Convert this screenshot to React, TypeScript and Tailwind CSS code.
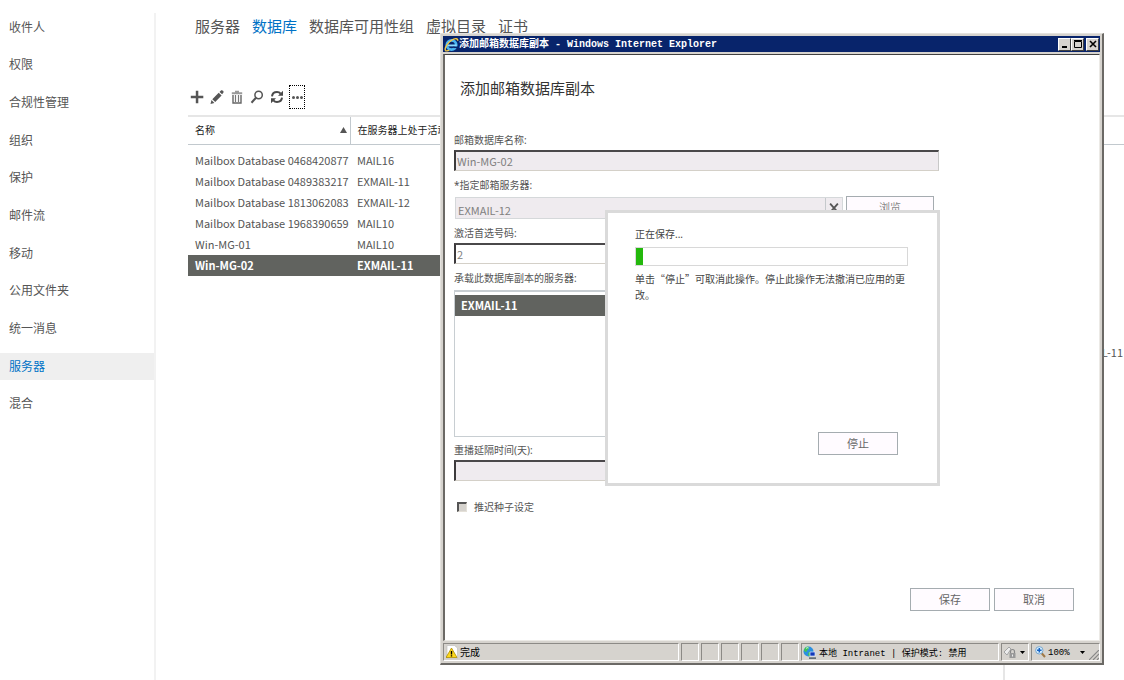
import type { ReactNode } from "react";

const NAV = [
  "收件人",
  "权限",
  "合规性管理",
  "组织",
  "保护",
  "邮件流",
  "移动",
  "公用文件夹",
  "统一消息",
  "服务器",
  "混合",
];

const TABS = ["服务器", "数据库", "数据库可用性组", "虚拟目录", "证书"];

const DATABASES = [
  { name: "Mailbox Database 0468420877", server: "MAIL16" },
  { name: "Mailbox Database 0489383217", server: "EXMAIL-11" },
  { name: "Mailbox Database 1813062083", server: "EXMAIL-12" },
  { name: "Mailbox Database 1968390659", server: "MAIL10" },
  { name: "Win-MG-01", server: "MAIL10" },
  { name: "Win-MG-02", server: "EXMAIL-11" },
];

const SUNKEN =
  "border border-t-[#8c8a86] border-l-[#8c8a86] border-r-white border-b-white";

const FIELD =
  "block w-[485px] h-[21px] border-2 border-t-[#4a484a] border-l-[#3c3a3c] border-r border-r-[#c8c8c8] border-b border-b-[#d4d0c8] px-px font-['Noto_Sans_CJK_SC',sans-serif] text-[11px] text-[#808080] outline-none";

function Sidebar() {
  return (
    <nav className="relative w-[156px] shrink-0 pt-[9px]">
      <span className="absolute top-[13px] right-0 bottom-0 w-[2px] bg-[#f2f2f2]" />
      <ul className="grid h-[414px] auto-rows-fr">
        {NAV.map((item) => (
          <li key={item} className="flex items-center">
            <a
              href="#"
              className={
                item === "服务器"
                  ? "flex h-[27px] w-full items-center bg-[#efefef] pl-[9px] text-[12px] text-[#0072c6]"
                  : "flex h-[27px] w-full items-center pl-[9px] text-[12px] text-[#555]"
              }
            >
              {item}
            </a>
          </li>
        ))}
      </ul>
    </nav>
  );
}

function Tool({ label, children }: { label: string; children: ReactNode }) {
  return (
    <button type="button" aria-label={label} className="flex size-4 items-center justify-center">
      {children}
    </button>
  );
}

function Toolbar() {
  return (
    <div className="flex h-6 items-center gap-1 pl-px">
      <Tool label="新建">
        <svg width="14" height="14" viewBox="0 0 14 14" fill="#555">
          <path d="M5.800 .8h2.500v5h5v2.500h-5v5H5.800v-5h-5V5.800h5z" />
        </svg>
      </Tool>
      <Tool label="编辑">
        <svg width="16" height="16" viewBox="0 0 16 16" fill="#555">
          <path d="M1.500 15l1-4 2.900 2.900zM3.300 10.200l6.400-6.500 2.900 2.900-6.400 6.500zM10.500 2.900l1.200-1.200c.8-.8 1.700-.6 2.300 0s.9 1.500.1 2.300l-1 1.300z" />
        </svg>
      </Tool>
      <Tool label="删除">
        <svg width="12" height="14" viewBox="0 0 12 14">
          <path d="M4 .8h4v1.500h3.200v2H.8v-2H4z" fill="#999" />
          <path d="M2 5v8h8V5" fill="none" stroke="#666" strokeWidth="1.400" />
          <path d="M4.500 5v7M7.500 5v7" stroke="#777" strokeWidth="1.200" />
        </svg>
      </Tool>
      <Tool label="搜索">
        <svg width="14" height="14" viewBox="0 0 14 14" fill="none" stroke="#555">
          <circle cx="8.600" cy="5" r="3.700" strokeWidth="1.500" />
          <path d="M6 7.800L1.500 12.800" strokeWidth="2.100" />
        </svg>
      </Tool>
      <Tool label="刷新">
        <svg width="14" height="14" viewBox="0 0 14 14">
          <path
            d="M2 6.300C2.300 3.500 4.500 2 7 2c1.500 0 2.700.5 3.700 1.600M12 7.700C11.700 10.500 9.500 12 7 12c-1.500 0-2.700-.5-3.700-1.600"
            fill="none"
            stroke="#4a4a4a"
            strokeWidth="2"
          />
          <path d="M13 .8v5H8zM1 13.200v-5h5z" fill="#4a4a4a" />
        </svg>
      </Tool>
      <button
        type="button"
        aria-label="更多"
        className="flex h-6 w-4 items-center justify-center gap-px border border-dotted border-black"
      >
        <span className="size-[3px] rounded-full bg-[#555]" />
        <span className="size-[3px] rounded-full bg-[#555]" />
        <span className="size-[3px] rounded-full bg-[#555]" />
      </button>
    </div>
  );
}

function DatabaseTable() {
  return (
    <table className="w-full table-fixed text-left whitespace-nowrap">
      <colgroup>
        <col className="w-[162px]" />
        <col />
      </colgroup>
      <thead>
        <tr className="h-[28px] border-t-2 border-b border-t-[#e6e6e6] border-b-[#c2c9ce] text-[10px] text-[#222]">
          <th className="border-r border-[#c2c9ce] py-0 pl-[7px] font-normal">
            <span className="flex items-center justify-between pr-[3px]">
              名称
              <svg width="7" height="6" viewBox="0 0 7 6" fill="#555">
                <path d="M3.500 0L7 6H0z" />
              </svg>
            </span>
          </th>
          <th className="py-0 pl-[7px] font-normal">在服务器上处于活动状态</th>
        </tr>
      </thead>
      <tbody className="font-['Noto_Sans_CJK_SC',sans-serif] text-[11px] text-[#555] before:block before:h-[5px]">
        {DATABASES.map((db) => (
          <tr
            key={db.name}
            className={
              db.name === "Win-MG-02"
                ? "h-[21px] bg-[#61635f] font-bold text-white"
                : "h-[21px]"
            }
          >
            <td className="p-0 pl-[7px] leading-4">{db.name}</td>
            <td className="p-0 pl-[7px] leading-4">{db.server}</td>
          </tr>
        ))}
      </tbody>
    </table>
  );
}

function IeLogo() {
  return (
    <svg width="15" height="15" viewBox="0 0 16 16" className="shrink-0">
      <circle cx="8" cy="8.500" r="5" fill="none" stroke="#49b5f0" strokeWidth="3" />
      <path d="M4 9h9.500" stroke="#8bdcff" strokeWidth="2" />
      <path d="M10 10.200h5v1.600h-5z" fill="#08246b" />
      <path
        d="M14.500 4C15.200 1.500 12 .8 8 3.500S.2 11.500 1.500 14.200c.6 1 2.500.6 4-.3"
        fill="none"
        stroke="#f5c945"
        strokeWidth="1.500"
      />
    </svg>
  );
}

function CaptionButton({ label, children }: { label: string; children: ReactNode }) {
  return (
    <button
      type="button"
      aria-label={label}
      className="flex h-[13px] w-[13px] items-center justify-center border border-t-white border-l-white border-r-[#404040] border-b-[#404040] bg-[#d6d3ce]"
    >
      <svg width="10" height="10" viewBox="0 0 10 10" fill="none" stroke="#000">
        {children}
      </svg>
    </button>
  );
}

function TitleBar() {
  return (
    <div className="flex h-4 items-center bg-[#08246b] px-px text-white">
      <IeLogo />
      <h1 className="grow truncate pt-[2px] font-['Liberation_Mono','Noto_Sans_CJK_SC',monospace] text-[10px] leading-4 font-bold">
        添加邮箱数据库副本 - Windows Internet Explorer
      </h1>
      <div className="flex">
        <CaptionButton label="最小化">
          <path d="M2 8h5" strokeWidth="2" />
        </CaptionButton>
        <CaptionButton label="最大化">
          <path d="M1.500 2.500h7v6h-7z" />
          <path d="M1 1.500h8" />
        </CaptionButton>
        <span className="w-[2px]" />
        <CaptionButton label="关闭">
          <path d="M2 2l6 6M8 2L2 8" strokeWidth="1.600" />
        </CaptionButton>
      </div>
    </div>
  );
}

function PushButton({ children }: { children: ReactNode }) {
  return (
    <button
      type="button"
      className="h-[23px] w-20 border border-[#a5acb0] bg-[#fffbff] text-[11px] leading-4 text-[#666]"
    >
      {children}
    </button>
  );
}

function SavingDialog() {
  return (
    <div
      role="dialog"
      aria-label="正在保存"
      className="absolute top-[155px] left-[160px] flex h-[276px] w-[335px] flex-col border-3 border-[#dadada] bg-white pt-[11px] pr-[29px] pb-7 pl-[27px] text-[10px] text-[#444]"
    >
      <p className="leading-5">正在保存...</p>
      <div
        role="progressbar"
        aria-label="正在保存"
        className="mt-[3px] h-[19px] border border-[#d8d8d8] bg-white"
      >
        <div className="h-full w-[7px] bg-[#23b80c]" />
      </div>
      <p className="mt-[5px] font-['Noto_Sans_CJK_SC',sans-serif] leading-4">
        单击“停止”可取消此操作。停止此操作无法撤消已应用的更改。
      </p>
      <div className="mt-auto flex justify-end pr-[10px]">
        <PushButton>停止</PushButton>
      </div>
    </div>
  );
}

function CopyForm() {
  return (
    <form className="relative flex grow flex-col bg-white pb-[29px] pl-[9px] text-[10px] leading-5 text-[#555]">
      <h2 className="mt-[21px] pl-[6px] text-[15px] leading-6 text-[#333]">添加邮箱数据库副本</h2>

      <label htmlFor="db-name" className="mt-[30px]">
        邮箱数据库名称:
      </label>
      <input
        id="db-name"
        readOnly
        defaultValue="Win-MG-02"
        className={`${FIELD} bg-[#efebef]`}
      />

      <label htmlFor="server" className="mt-1">
        *指定邮箱服务器:
      </label>
      <div className="mt-px flex items-start gap-[3px] pl-px">
        <div className="mt-px flex h-[22px] w-[388px] border border-[#d5d8da] bg-[#efebef]">
          <input
            id="server"
            readOnly
            defaultValue="EXMAIL-12"
            className="min-w-0 grow px-[2px] pt-[3px] font-['Noto_Sans_CJK_SC',sans-serif] text-[11px] text-[#808080] outline-none"
          />
          <button
            type="button"
            aria-label="清除"
            className="flex w-[17px] items-center justify-center border-l border-[#c5c9cc]"
          >
            <svg width="10" height="10" viewBox="0 0 9 9" fill="none" stroke="#555" strokeWidth="1.600">
              <path d="M1 .5l7 8M8 .5l-7 8" />
            </svg>
          </button>
        </div>
        <button
          type="button"
          className="h-[23px] w-[88px] border border-[#a5acb0] bg-[#fffbff] text-[11px] leading-4 text-[#888]"
        >
          浏览
        </button>
      </div>

      <label htmlFor="preference" className="mt-1">
        激活首选号码:
      </label>
      <input id="preference" defaultValue="2" className={`${FIELD} bg-white`} />

      <span id="hosts" className="mt-1">
        承载此数据库副本的服务器:
      </span>
      <ul
        role="listbox"
        aria-labelledby="hosts"
        className="mt-[2px] h-[147px] w-[485px] border border-t-2 border-[#c8ced2] pt-[3px]"
      >
        <li
          role="option"
          aria-selected="true"
          className="h-[21px] bg-[#61635f] pl-[6px] font-['Noto_Sans_CJK_SC',sans-serif] text-[11px] leading-[21px] font-bold text-white"
        >
          EXMAIL-11
        </li>
      </ul>

      <label htmlFor="replay-lag" className="mt-[3px]">
        重播延隔时间(天):
      </label>
      <input id="replay-lag" readOnly className={`${FIELD} bg-[#efebef]`} />

      <div className="mt-4 flex items-center gap-[7px] pl-[3px]">
        <input
          id="postpone"
          type="checkbox"
          className="size-[10px] appearance-none border border-t-2 border-l-2 border-t-[#555] border-l-[#555] border-r-[#e4e0d8] border-b-[#e4e0d8] bg-[#d6d3ce]"
        />
        <label htmlFor="postpone">推迟种子设定</label>
      </div>

      <div className="mt-auto flex justify-end gap-1 pr-[25px]">
        <PushButton>保存</PushButton>
        <PushButton>取消</PushButton>
      </div>

      <SavingDialog />
    </form>
  );
}

function Caret() {
  return (
    <svg width="5" height="3" viewBox="0 0 5 3">
      <path d="M0 0h5L2.500 3z" />
    </svg>
  );
}

function StatusBar() {
  return (
    <div className="flex h-[18px] gap-[2px] font-['Liberation_Mono','Noto_Sans_CJK_SC',monospace] text-[10px] leading-4 whitespace-nowrap text-black">
      <div className={`${SUNKEN} flex grow items-center gap-[2px] pl-[2px]`}>
        <svg width="12" height="14" viewBox="0 0 12 14">
          <path d="M1 .5h7.500L11.500 3v10.500H1z" fill="#fff" stroke="#bbb" strokeWidth=".6" />
          <path d="M5.500 3L11 12.500H0z" fill="#ffd91c" stroke="#a98a00" strokeWidth=".8" />
          <path d="M5.500 6v3.500M5.500 10.300v1.200" stroke="#000" strokeWidth="1.400" />
        </svg>
        <span className="pt-1">完成</span>
      </div>
      {[1, 2, 3, 4, 5, 6].map((n) => (
        <div key={n} className={`${SUNKEN} w-[18px]`} />
      ))}
      <div className={`${SUNKEN} flex w-[198px] items-center gap-[3px] pl-px`}>
        <svg width="13" height="13" viewBox="0 0 13 13">
          <circle cx="5.500" cy="5.500" r="5" fill="#2b8fe0" />
          <path d="M2 2c2-2 4-1 4 0S4 4 3.500 5.500 1 5 1 4zM6 6c2-1 3 1 2 3s-3 1-3-1z" fill="#43c552" />
          <path d="M3 2.500c1-1 2-1 2.500-.5" stroke="#dff6ff" fill="none" />
          <path d="M7 6h5v4H7z" fill="#1238b8" stroke="#dbe6ff" strokeWidth=".7" />
          <path d="M6 11.500h7v1.200H6z" fill="#345" />
        </svg>
        <span className="pt-1 text-[9px]">本地 Intranet | 保护模式: 禁用</span>
      </div>
      <button
        type="button"
        aria-label="隐私"
        className={`${SUNKEN} flex w-[28px] items-center justify-between pr-[3px] pl-px`}
      >
        <svg width="14" height="14" viewBox="0 0 14 14">
          <path d="M1 7l5-5 2 2-4 6z" fill="#ececec" stroke="#a5a5a5" />
          <path d="M7.500 8V6.500a2 2 0 0 1 4 0V8" fill="none" stroke="#888" strokeWidth="1.200" />
          <path d="M6.500 8h6v5h-6z" fill="#999" />
          <path d="M9.500 9.500v2" stroke="#eee" />
        </svg>
        <Caret />
      </button>
      <button
        type="button"
        className={`${SUNKEN} relative flex w-[69px] items-center gap-[2px] pl-[3px]`}
      >
        <svg width="11" height="12" viewBox="0 0 11 12">
          <path d="M6.500 7L10 11" stroke="#a07a48" strokeWidth="2" />
          <circle cx="4.300" cy="4.300" r="3.700" fill="#d7efff" stroke="#7aa7cc" />
          <path d="M4.300 2v4.600M2 4.300h4.600" stroke="#1763c4" strokeWidth="1.500" />
        </svg>
        <span className="pt-[2px] pr-2 text-[9px]">100%</span>
        <Caret />
        <svg width="10" height="10" viewBox="0 0 10 10" className="absolute right-0 bottom-0">
          <path d="M0 10L10 0M4 10l6-6M8 10l2-2" stroke="#888" strokeWidth="1.200" />
        </svg>
      </button>
    </div>
  );
}

function BrowserWindow() {
  return (
    <section className="absolute top-[33px] right-[20px] left-[440px] flex h-[632px] flex-col border border-t-[#e4e2de] border-r-2 border-b-2 border-l-[#e4e2de] border-r-[#6b6965] border-b-[#6b6965] bg-[#d6d3ce] p-[2px]">
      <TitleBar />
      <div className="my-[2px] flex grow flex-col border border-t-[#404040] border-r-[#eceae6] border-b-[#eceae6] border-l-2 border-l-[#6b6965]">
        <CopyForm />
      </div>
      <StatusBar />
    </section>
  );
}

export default function App() {
  return (
    <div
      lang="zh-CN"
      className="relative flex min-h-screen overflow-hidden bg-white font-['Noto_Sans','Noto_Sans_CJK_SC',sans-serif]"
    >
      <Sidebar />
      <main className="flex min-w-0 grow flex-col pt-[14px] pl-8">
        <div className="flex gap-3 pl-[7px] text-[15px] leading-6 whitespace-nowrap text-[#555]">
          {TABS.map((tab) => (
            <a key={tab} href="#" className={tab === "数据库" ? "text-[#0072c6]" : ""}>
              {tab}
            </a>
          ))}
        </div>
        <div className="mt-[47px]">
          <Toolbar />
        </div>
        <div className="mt-[6px] flex grow">
          <div className="min-w-0 grow">
            <DatabaseTable />
          </div>
          <aside className="w-[121px] shrink-0 border-l-2 border-[#e6e6e6] font-['Noto_Sans_CJK_SC',sans-serif] text-[11px] text-[#555]">
            <div className="h-[30px] border-t-2 border-b border-t-[#e6e6e6] border-b-[#c2c9ce]" />
            <p className="mt-[197px] pr-px text-right leading-5 whitespace-nowrap">EXMAIL-11</p>
          </aside>
        </div>
      </main>
      <BrowserWindow />
    </div>
  );
}
